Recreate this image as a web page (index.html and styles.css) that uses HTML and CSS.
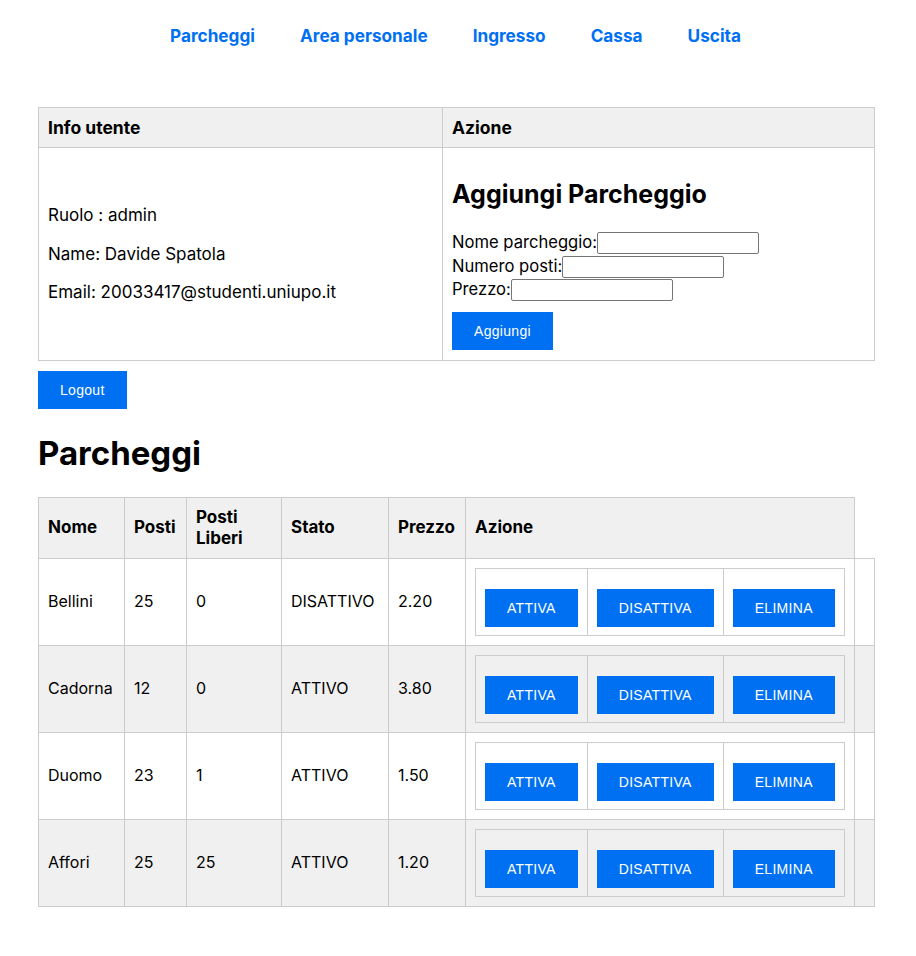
FILE: index.html
```html
<!DOCTYPE html>
<html lang="it">
<head>
<meta charset="utf-8">
<title>Parcheggi</title>
<link rel="stylesheet" href="styles.css">
</head>
<body>
<nav class="nav">
  <a href="#">Parcheggi</a>
  <a href="#">Area personale</a>
  <a href="#">Ingresso</a>
  <a href="#">Cassa</a>
  <a href="#">Uscita</a>
</nav>
<main class="content">
  <table class="grid info">
    <colgroup><col class="c-info"><col class="c-az"></colgroup>
    <thead>
      <tr><th>Info utente</th><th>Azione</th></tr>
    </thead>
    <tbody>
      <tr>
        <td class="mid">
          <p>Ruolo : admin</p>
          <p>Name: Davide Spatola</p>
          <p>Email: 20033417@studenti.uniupo.it</p>
        </td>
        <td class="top">
          <h2>Aggiungi Parcheggio</h2>
          <form class="form">
            <label>Nome parcheggio:</label><input type="text"><br>
            <label>Numero posti:</label><input type="text"><br>
            <label>Prezzo:</label><input type="text"><br>
            <button type="button" class="btn">Aggiungi</button>
          </form>
        </td>
      </tr>
    </tbody>
  </table>
  <button type="button" class="btn">Logout</button>
  <h1>Parcheggi</h1>
  <table class="grid parks">
    <colgroup>
      <col class="w-nome"><col class="w-posti"><col class="w-liberi"><col class="w-stato"><col class="w-prezzo"><col class="w-azione"><col class="w-extra">
    </colgroup>
    <thead>
      <tr><th>Nome</th><th>Posti</th><th>Posti Liberi</th><th>Stato</th><th>Prezzo</th><th>Azione</th></tr>
    </thead>
    <tbody>
      <tr>
        <td>Bellini</td><td>25</td><td>0</td><td>DISATTIVO</td><td>2.20</td>
        <td><table class="actions"><tr><td><button type="button" class="btn">ATTIVA</button></td><td><button type="button" class="btn">DISATTIVA</button></td><td><button type="button" class="btn">ELIMINA</button></td></tr></table></td>
        <td></td>
      </tr>
      <tr>
        <td>Cadorna</td><td>12</td><td>0</td><td>ATTIVO</td><td>3.80</td>
        <td><table class="actions"><tr><td><button type="button" class="btn">ATTIVA</button></td><td><button type="button" class="btn">DISATTIVA</button></td><td><button type="button" class="btn">ELIMINA</button></td></tr></table></td>
        <td></td>
      </tr>
      <tr>
        <td>Duomo</td><td>23</td><td>1</td><td>ATTIVO</td><td>1.50</td>
        <td><table class="actions"><tr><td><button type="button" class="btn">ATTIVA</button></td><td><button type="button" class="btn">DISATTIVA</button></td><td><button type="button" class="btn">ELIMINA</button></td></tr></table></td>
        <td></td>
      </tr>
      <tr>
        <td>Affori</td><td>25</td><td>25</td><td>ATTIVO</td><td>1.20</td>
        <td><table class="actions"><tr><td><button type="button" class="btn">ATTIVA</button></td><td><button type="button" class="btn">DISATTIVA</button></td><td><button type="button" class="btn">ELIMINA</button></td></tr></table></td>
        <td></td>
      </tr>
    </tbody>
  </table>
</main>
</body>
</html>
```
FILE: styles.css
```css
html, body {
  margin: 0;
  padding: 0;
  background: #fff;
}
body {
  font-family: Inter, "Noto Sans", sans-serif;
  font-size: 16px;
  line-height: 1.3;
  color: #000;
}
.nav {
  display: flex;
  justify-content: center;
  gap: 45px;
  padding: 25px 0 24px;
  margin-left: -5px;
}
.nav a {
  color: #0070f3;
  text-decoration: none;
  font-weight: 700;
  font-size: 17.2px;
  line-height: 22px;
}
.content {
  width: 836px;
  margin: 36px 0 0 38px;
}
.grid {
  width: 100%;
  border-collapse: collapse;
  table-layout: fixed;
}
.grid > thead > tr > th,
.grid > tbody > tr > td {
  border: 1px solid #ccc;
  padding: 10px 10px 10px 9px;
  text-align: left;
  vertical-align: middle;
}
.grid > thead > tr > th {
  background: #f0f0f0;
  font-weight: 700;
}
.c-info { width: 404px; }
.c-az { width: 432px; }
.info > thead > tr > th {
  font-size: 17.5px;
  line-height: 19px;
}
.info td.top { vertical-align: top; }
.info p {
  margin: 16px 0;
  font-size: 17px;
  line-height: 22.4px;
}
.info h2 {
  font-size: 25px;
  line-height: 30px;
  margin: 21px 0 22px;
  font-weight: 700;
}
.form {
  margin: 0;
  font-size: 16.6px;
  line-height: 23.5px;
}
.form input {
  box-sizing: border-box;
  width: 162px;
  height: 22px;
  border: 1px solid #767676;
  border-radius: 2px;
  padding: 1px 2px;
  vertical-align: baseline;
  font: 13px Inter, sans-serif;
}
.btn {
  margin-top: 10px;
  background: #0070f3;
  color: #fff;
  border: 0;
  padding: 11px 22px;
  font-family: "Liberation Sans", Arial, sans-serif;
  font-size: 14px;
  line-height: 16px;
  letter-spacing: 0.3px;
  cursor: pointer;
}
.content > .btn { display: block; margin-top: 10px; }
h1 {
  font-size: 33px;
  line-height: 48px;
  margin: 20px 0 20px;
  font-weight: 700;
}
.w-nome { width: 86px; }
.w-posti { width: 62px; }
.w-liberi { width: 95px; }
.w-stato { width: 107px; }
.w-prezzo { width: 77px; }
.w-azione { width: 389px; }
.w-extra { width: 20px; }
.parks > thead > tr > th {
  padding: 9px 10px 9px 9px;
  font-size: 17px;
  line-height: 21px;
}
.parks > tbody > tr > td { padding: 9px 10px 9px 9px; }
.parks > tbody > tr:nth-child(even) > td { background: #f0f0f0; }
.actions {
  border-collapse: collapse;
}
.actions td {
  border: 1px solid #ccc;
  padding: 10px 9px 8px;
}
.actions .btn { display: block; }
```
